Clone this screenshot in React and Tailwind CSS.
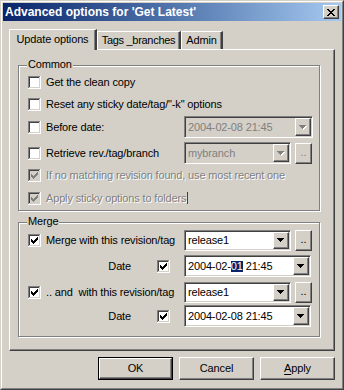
import React from 'react';

const raised =
  'border border-t-white border-l-white border-r-[#404040] border-b-[#404040] shadow-[inset_-1px_-1px_0_#808080]';
const sunken =
  'border border-t-[#808080] border-l-[#808080] border-r-white border-b-white shadow-[inset_1px_1px_0_#404040,inset_-1px_-1px_0_#d4d0c8]';

const CHECK = [
  [3, 5], [4, 6], [5, 7], [6, 6], [7, 5], [8, 4], [9, 3],
];

function CheckBox({ checked, disabled }) {
  const inner = disabled ? '#d4d0c8' : '#ffffff';
  const tick = disabled ? '#808080' : '#000000';
  return (
    <svg width="13" height="13" viewBox="0 0 13 13" className="shrink-0 block" shapeRendering="crispEdges">
      <rect x="0" y="0" width="13" height="13" fill="#ffffff" />
      <rect x="0" y="0" width="12" height="1" fill="#808080" />
      <rect x="0" y="0" width="1" height="12" fill="#808080" />
      <rect x="1" y="1" width="10" height="1" fill="#404040" />
      <rect x="1" y="1" width="1" height="10" fill="#404040" />
      <rect x="1" y="11" width="11" height="1" fill="#d4d0c8" />
      <rect x="11" y="1" width="1" height="11" fill="#d4d0c8" />
      <rect x="2" y="2" width="9" height="9" fill={inner} />
      {checked && CHECK.map(([x, y]) => <rect key={x} x={x} y={y} width="1" height="3" fill={tick} />)}
    </svg>
  );
}

function Arrow({ disabled }) {
  const c = disabled ? '#808080' : '#000000';
  return (
    <svg width="8" height="5" viewBox="0 0 8 5" shapeRendering="crispEdges">
      {disabled && (
        <g fill="#ffffff">
          <rect x="1" y="1" width="7" height="1" />
          <rect x="2" y="2" width="5" height="1" />
          <rect x="3" y="3" width="3" height="1" />
          <rect x="4" y="4" width="1" height="1" />
        </g>
      )}
      <g fill={c}>
        <rect x="0" y="0" width="7" height="1" />
        <rect x="1" y="1" width="5" height="1" />
        <rect x="2" y="2" width="3" height="1" />
        <rect x="3" y="3" width="1" height="1" />
      </g>
    </svg>
  );
}

function Field({ className, disabled, children }) {
  return (
    <div
      className={`flex shrink-0 p-px ${sunken} ${className} ${
        disabled ? 'bg-[#d4d0c8] text-[#808080]' : 'bg-white text-black'
      }`}
    >
      <div className="flex-1 flex items-center pl-[2px] whitespace-nowrap">{children}</div>
      <div className={`w-[16px] flex items-center justify-center bg-[#d4d0c8] ${raised}`}>
        <Arrow disabled={disabled} />
      </div>
    </div>
  );
}

function DotsButton({ disabled }) {
  return (
    <div
      className={`ml-[4px] w-[17px] h-[21px] shrink-0 flex items-end justify-center pb-[5px] bg-[#d4d0c8] ${raised} ${
        disabled ? 'text-[#808080]' : 'text-black'
      }`}
    >
      ..
    </div>
  );
}

function Group({ label, className, children }) {
  return (
    <div
      className={`relative w-[302px] border border-[#808080] shadow-[inset_1px_1px_0_#fff,1px_1px_0_#fff] ${className}`}
    >
      <span className="absolute left-[8px] -top-[8px] bg-[#d4d0c8] px-[1px] leading-[13px]">{label}</span>
      {children}
    </div>
  );
}

const emboss = 'text-[#808080] [text-shadow:1px_1px_0_#fff]';

export default function App() {
  return (
    <div className="w-[344px] h-[390px] bg-[#d4d0c8] font-['Liberation_Sans',Arial,sans-serif] text-[11px] leading-none tracking-[-0.15px] text-black select-none">
      <div className="h-full border border-t-[#d4d0c8] border-l-[#d4d0c8] border-r-[#404040] border-b-[#404040]">
        <div className="h-full flex flex-col border border-t-white border-l-white border-r-[#808080] border-b-[#808080] p-px">
          {/* Title bar */}
          <div className="h-[18px] shrink-0 flex items-center justify-between pl-[2px] pr-[2px] bg-linear-to-r from-[#0a246a] to-[#a6caf0]">
            <span className="text-white font-bold text-[12px] tracking-normal whitespace-nowrap">Advanced options for 'Get Latest'</span>
            <div className={`w-[16px] h-[14px] flex items-center justify-center bg-[#d4d0c8] ${raised}`}>
              <svg width="8" height="7" viewBox="0 0 8 7" shapeRendering="crispEdges" fill="#000">
                <rect x="0" y="0" width="2" height="1" />
                <rect x="6" y="0" width="2" height="1" />
                <rect x="1" y="1" width="2" height="1" />
                <rect x="5" y="1" width="2" height="1" />
                <rect x="2" y="2" width="4" height="1" />
                <rect x="3" y="3" width="2" height="1" />
                <rect x="2" y="4" width="4" height="1" />
                <rect x="1" y="5" width="2" height="1" />
                <rect x="5" y="5" width="2" height="1" />
                <rect x="0" y="6" width="2" height="1" />
                <rect x="6" y="6" width="2" height="1" />
              </svg>
            </div>
          </div>

          {/* Body */}
          <div className="px-[6px] pt-[8px]">
            {/* Tabs */}
            <div className="h-[20px] flex items-start">
              <div className="relative z-10 w-[88px] h-[21px] flex items-center justify-center pb-[2px] bg-[#d4d0c8] border-t border-l border-t-white border-l-white border-r-2 border-r-[#404040] shadow-[inset_-1px_0_0_#808080]">
                Update options
              </div>
              <div className="mt-[2px] w-[84px] h-[18px] flex items-center justify-center whitespace-nowrap tracking-[-0.3px] border-t border-l border-t-white border-l-white border-r-2 border-r-[#404040] shadow-[inset_-1px_0_0_#808080]">
                Tags _branches
              </div>
              <div className="mt-[2px] w-[42px] h-[18px] flex items-center justify-center border-t border-l border-t-white border-l-white border-r-2 border-r-[#404040] shadow-[inset_-1px_0_0_#808080]">
                Admin
              </div>
            </div>

            {/* Tab panel */}
            <div className={`h-[302px] pl-[8px] pt-[15px] ${raised}`}>
              <Group label="Common" className="h-[146px] pt-[5px]">
                <div className="h-[22px] flex items-center pl-[9px] gap-[5px]">
                  <CheckBox />
                  <span>Get the clean copy</span>
                </div>
                <div className="h-[23px] flex items-center pl-[9px] gap-[5px] whitespace-nowrap">
                  <CheckBox />
                  <span>Reset any sticky date/tag/"-k" options</span>
                </div>
                <div className="h-[22px] flex items-center">
                  <div className="w-[165px] shrink-0 flex items-center pl-[9px] gap-[5px]">
                    <CheckBox />
                    <span>Before date:</span>
                  </div>
                  <Field disabled className="w-[129px] h-[22px]">2004-02-08 21:45</Field>
                </div>
                <div className="mt-[4px] h-[22px] flex items-center">
                  <div className="w-[165px] shrink-0 flex items-center pl-[9px] gap-[5px] whitespace-nowrap">
                    <CheckBox />
                    <span>Retrieve rev./tag/branch</span>
                  </div>
                  <Field disabled className="w-[107px] h-[22px]">mybranch</Field>
                  <DotsButton disabled />
                </div>
                <div className="h-[23px] flex items-center pl-[9px] gap-[5px] whitespace-nowrap">
                  <CheckBox checked disabled />
                  <span className={emboss}>If no matching revision found, use most recent one</span>
                </div>
                <div className="h-[22px] flex items-center pl-[9px] gap-[5px] whitespace-nowrap">
                  <CheckBox checked disabled />
                  <span className={emboss}>Apply sticky options to folders</span>
                  <span className="-ml-[4px] w-px h-[12px] bg-[#404040]" />
                </div>
              </Group>

              <Group label="Merge" className="mt-[11px] h-[115px] pt-[7px]">
                <div className="h-[21px] flex items-center">
                  <div className="w-[165px] shrink-0 flex items-center pl-[9px] gap-[5px] whitespace-nowrap">
                    <CheckBox checked />
                    <span>Merge with this revision/tag</span>
                  </div>
                  <Field className="w-[107px] h-[21px]">release1</Field>
                  <DotsButton />
                </div>
                <div className="mt-[4px] h-[22px] flex items-center">
                  <div className="w-[165px] shrink-0 flex items-center justify-end pr-[14px]">
                    <span>Date</span>
                    <span className="ml-[26px]">
                      <CheckBox checked />
                    </span>
                  </div>
                  <Field className="w-[127px] h-[22px]">
                    2004-02-<span className="bg-[#0a246a] text-white">01</span>&nbsp;21:45
                  </Field>
                </div>
                <div className="mt-[5px] h-[21px] flex items-center">
                  <div className="w-[165px] shrink-0 flex items-center pl-[9px] gap-[5px] whitespace-pre">
                    <CheckBox checked />
                    <span>.. and  with this revision/tag</span>
                  </div>
                  <Field className="w-[107px] h-[21px]">release1</Field>
                  <DotsButton />
                </div>
                <div className="mt-[2px] h-[22px] flex items-center">
                  <div className="w-[165px] shrink-0 flex items-center justify-end pr-[14px]">
                    <span>Date</span>
                    <span className="ml-[26px]">
                      <CheckBox checked />
                    </span>
                  </div>
                  <Field className="w-[127px] h-[22px]">2004-02-08 21:45</Field>
                </div>
              </Group>
            </div>

            {/* Dialog buttons */}
            <div className="mt-[6px] flex justify-end gap-[6px]">
              <div className="w-[75px] h-[23px] border border-black">
                <div className={`h-full flex items-center justify-center ${raised}`}>OK</div>
              </div>
              <div className={`w-[75px] h-[23px] flex items-center justify-center ${raised}`}>Cancel</div>
              <div className={`w-[75px] h-[23px] flex items-center justify-center ${raised}`}>
                <span>
                  <span className="underline underline-offset-2">A</span>pply
                </span>
              </div>
            </div>
          </div>
        </div>
      </div>
    </div>
  );
}
